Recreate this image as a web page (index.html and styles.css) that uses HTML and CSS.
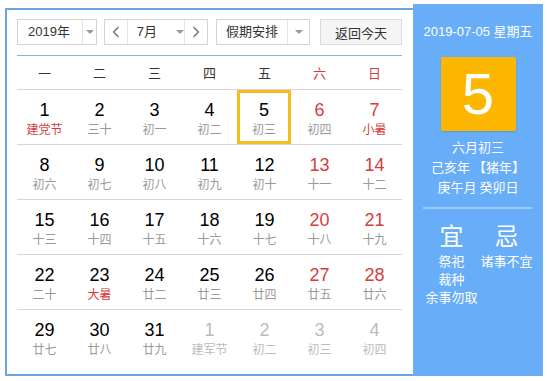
FILE: index.html
```html
<!DOCTYPE html>
<html>
<head>
    <meta charset="utf-8">
    <title>万年历</title>
    <link rel="stylesheet" href="styles.css">
</head>
<body>
<div class="calendar">
    <div class="main">
        <div class="toolbar">
            <div class="select year">
                <span class="label">2019年</span>
                <span class="drop"><i class="caret"></i></span>
            </div>
            <div class="select month">
                <span class="nav">
                    <svg width="8" height="12" viewBox="0 0 8 12"><polyline points="6.5,1 1.5,6 6.5,11" fill="none" stroke="#666" stroke-width="1.2"/></svg>
                </span>
                <span class="label">7月<i class="caret"></i></span>
                <span class="nav">
                    <svg width="8" height="12" viewBox="0 0 8 12"><polyline points="1.5,1 6.5,6 1.5,11" fill="none" stroke="#666" stroke-width="1.2"/></svg>
                </span>
            </div>
            <div class="select holiday">
                <span class="label">假期安排</span>
                <span class="drop"><i class="caret"></i></span>
            </div>
            <button class="today">返回今天</button>
        </div>

        <div class="week">
            <span>一</span><span>二</span><span>三</span><span>四</span><span>五</span>
            <span class="red">六</span><span class="red">日</span>
        </div>

        <div class="days">
            <div class="row">
                <div class="day"><b>1</b><em class="fest">建党节</em></div>
                <div class="day"><b>2</b><em>三十</em></div>
                <div class="day"><b>3</b><em>初一</em></div>
                <div class="day"><b>4</b><em>初二</em></div>
                <div class="day current"><b>5</b><em>初三</em></div>
                <div class="day weekend"><b>6</b><em>初四</em></div>
                <div class="day weekend"><b>7</b><em class="fest">小暑</em></div>
            </div>
            <div class="row">
                <div class="day"><b>8</b><em>初六</em></div>
                <div class="day"><b>9</b><em>初七</em></div>
                <div class="day"><b>10</b><em>初八</em></div>
                <div class="day"><b>11</b><em>初九</em></div>
                <div class="day"><b>12</b><em>初十</em></div>
                <div class="day weekend"><b>13</b><em>十一</em></div>
                <div class="day weekend"><b>14</b><em>十二</em></div>
            </div>
            <div class="row">
                <div class="day"><b>15</b><em>十三</em></div>
                <div class="day"><b>16</b><em>十四</em></div>
                <div class="day"><b>17</b><em>十五</em></div>
                <div class="day"><b>18</b><em>十六</em></div>
                <div class="day"><b>19</b><em>十七</em></div>
                <div class="day weekend"><b>20</b><em>十八</em></div>
                <div class="day weekend"><b>21</b><em>十九</em></div>
            </div>
            <div class="row">
                <div class="day"><b>22</b><em>二十</em></div>
                <div class="day"><b>23</b><em class="fest">大暑</em></div>
                <div class="day"><b>24</b><em>廿二</em></div>
                <div class="day"><b>25</b><em>廿三</em></div>
                <div class="day"><b>26</b><em>廿四</em></div>
                <div class="day weekend"><b>27</b><em>廿五</em></div>
                <div class="day weekend"><b>28</b><em>廿六</em></div>
            </div>
            <div class="row">
                <div class="day"><b>29</b><em>廿七</em></div>
                <div class="day"><b>30</b><em>廿八</em></div>
                <div class="day"><b>31</b><em>廿九</em></div>
                <div class="day other"><b>1</b><em>建军节</em></div>
                <div class="day other"><b>2</b><em>初二</em></div>
                <div class="day other"><b>3</b><em>初三</em></div>
                <div class="day other"><b>4</b><em>初四</em></div>
            </div>
        </div>
    </div>

    <div class="side">
        <div class="date">2019-07-05 星期五</div>
        <div class="big">5</div>
        <div class="lunar">
            <div>六月初三</div>
            <div>己亥年 【猪年】</div>
            <div>庚午月 癸卯日</div>
        </div>
        <div class="sep"></div>
        <div class="almanac">
            <div class="col">
                <div class="head">宜</div>
                <div>祭祀</div>
                <div>裁种</div>
                <div>余事勿取</div>
            </div>
            <div class="col">
                <div class="head">忌</div>
                <div>诸事不宜</div>
            </div>
        </div>
    </div>
</div>
</body>
</html>
```

FILE: styles.css
```css
body {
    margin: 0;
    background: #fff;
    font-family: "Liberation Sans", Arial, "Noto Sans CJK SC", sans-serif;
    color: #333;
}

.calendar {
    display: flex;
    padding: 4px 0 0 5px;
}

/* left part */
.main {
    margin-top: 4px;
    border: 2px solid #6aa6e6;
    border-right: none;
    padding: 9px 11px 0 10px;
    width: 385px;
    height: 355px;
}

.toolbar {
    display: flex;
    height: 26px;
    font-size: 13px;
}

.select {
    display: flex;
    height: 26px;
    box-sizing: border-box;
    border: 1px solid #d4d4d4;
    background: #fff;
}
.select .label {
    display: flex;
    align-items: center;
    line-height: 24px;
}
.select .drop {
    display: flex;
    align-items: center;
    justify-content: center;
    border-left: 1px solid #e2e2e2;
}
.caret {
    display: inline-block;
    width: 0;
    height: 0;
    border-top: 4px solid #999;
    border-left: 4px solid transparent;
    border-right: 4px solid transparent;
}

.year { width: 80px; }
.year .label { width: 54px; padding-left: 10px; }
.year .drop { flex-grow: 1; }

.month { width: 104px; margin-left: 7px; }
.month .nav {
    width: 22px;
    display: flex;
    align-items: center;
    justify-content: center;
}
.month .label {
    width: 59px;
    box-sizing: border-box;
    border-left: 1px solid #e2e2e2;
    border-right: 1px solid #e2e2e2;
    padding-left: 9px;
}
.month .label .caret { margin-left: 19px; }

.holiday { width: 94px; margin-left: 8px; }
.holiday .label { width: 70px; justify-content: center; }
.holiday .drop { flex-grow: 1; }

.today {
    width: 82px;
    height: 26px;
    margin-left: 10px;
    border: 1px solid #dcdcdc;
    background: #f5f5f5;
    color: #333;
    font-family: inherit;
    font-size: 13px;
    padding: 0;
}

.week {
    display: grid;
    grid-template-columns: repeat(7, 55px);
    margin-top: 10px;
    border-top: 1px solid #7fb4ea;
    border-bottom: 1px solid #d6d6d6;
    height: 33px;
    align-items: center;
    text-align: center;
    font-size: 13px;
    color: #333;
    font-family: "Noto Sans CJK SC", sans-serif;
}
.week .red { color: #d43d3d; }

.row {
    display: grid;
    grid-template-columns: repeat(7, 55px);
    height: 54px;
    border-bottom: 1px solid #d6d6d6;
}
.row:last-child { border-bottom: none; }

.day {
    display: flex;
    flex-direction: column;
    align-items: center;
    padding-top: 10px;
    box-sizing: border-box;
}
.day b {
    font-weight: normal;
    font-size: 18px;
    line-height: 20px;
    color: #000;
}
.day em {
    font-style: normal;
    font-size: 12px;
    line-height: 18px;
    color: #999;
    font-family: "Noto Sans CJK SC", sans-serif;
}
.day em.fest { color: #d43d3d; }
.day.weekend b { color: #d43d3d; }
.day.other b,
.day.other em { color: #bbb; }
.day.current {
    border: 3px solid #f5bd1f;
    padding-top: 7px;
    width: 54px;
    height: 54px;
}

/* right part */
.side {
    width: 130px;
    height: 372px;
    background: #68adf7;
    color: #fff;
    text-align: center;
    font-size: 13px;
}
.date {
    padding-top: 18px;
    line-height: 20px;
}
.big {
    width: 75px;
    height: 74px;
    margin: 15px auto 0;
    background: #fdb700;
    border-radius: 2px;
    box-shadow: 0 1px 2px rgba(0, 0, 0, .15);
    font-size: 58px;
    line-height: 74px;
}
.lunar {
    margin-top: 6px;
    line-height: 20px;
    font-family: "Noto Sans CJK SC", sans-serif;
}
.sep {
    margin: 10px 11px 0 10px;
    height: 2px;
    background: #9ccafa;
}
.almanac {
    display: grid;
    grid-template-columns: 55px 55px;
    padding-left: 11px;
    margin-top: 12px;
    font-family: "Noto Sans CJK SC", sans-serif;
    line-height: 18px;
}
.almanac .col div { white-space: nowrap; }
.almanac .head {
    font-size: 24px;
    line-height: 28px;
    margin-bottom: 3px;
}
```
